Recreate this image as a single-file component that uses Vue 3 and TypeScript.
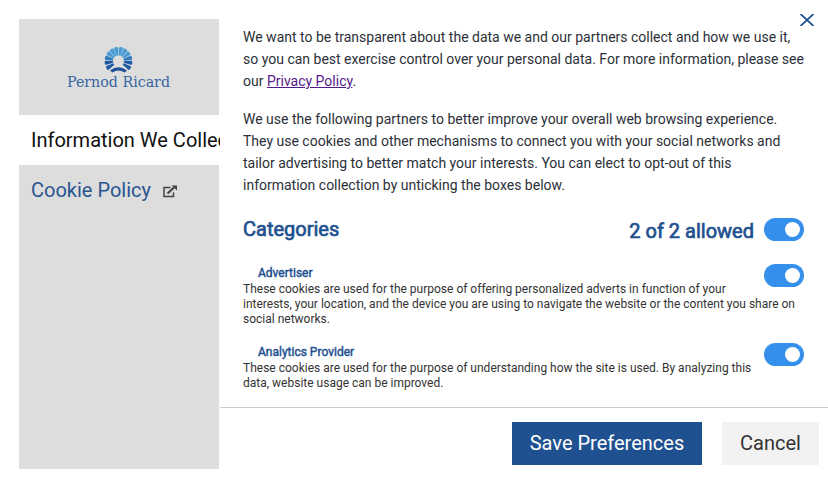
<script setup lang="ts">
import { reactive, computed } from 'vue'

interface Category {
  name: string
  text: string
  allowed: boolean
}

const categories = reactive<Category[]>([
  {
    name: 'Advertiser',
    text: 'These cookies are used for the purpose of offering personalized adverts in function of your interests, your location, and the device you are using to navigate the website or the content you share on social networks.',
    allowed: true,
  },
  {
    name: 'Analytics Provider',
    text: 'These cookies are used for the purpose of understanding how the site is used. By analyzing this data, website usage can be improved.',
    allowed: true,
  },
])

const allowedCount = computed(() => categories.filter((c) => c.allowed).length)
const allAllowed = computed(() => allowedCount.value === categories.length)

function toggleAll() {
  const next = !allAllowed.value
  categories.forEach((c) => (c.allowed = next))
}

const rays = [-122, -98, -75, -53, -32, -11, 11, 32, 53, 75, 98, 122].map((angle) => ({
  angle,
  color: Math.abs(angle) > 90 ? '#1f5ba5' : Math.abs(angle) > 60 ? '#2f7cc0' : '#4a9bd3',
}))
</script>

<template>
  <div class="dialog">
    <aside class="side">
      <div class="brand">
        <svg width="110" height="50" viewBox="0 0 110 50">
          <g transform="translate(54.5 17)">
            <path
              v-for="r in rays"
              :key="r.angle"
              d="M-0.900 -5.500L-2.200 -13.300Q0 -15 2.200 -13.300L0.900 -5.500Z"
              :fill="r.color"
              :transform="`rotate(${r.angle})`"
            />
            <path d="M-8.500 9.500Q0 3 8.500 9.500L6 11.500Q0 7.500 -6 11.500Z" fill="#1f5199" />
          </g>
          <text x="3" y="43" textLength="103" lengthAdjust="spacingAndGlyphs" class="brand-name">Pernod Ricard</text>
        </svg>
      </div>
      <div class="tab active">Information We Collect</div>
      <div class="tab link">
        <span>Cookie Policy</span>
        <svg class="ext" width="14" height="13" viewBox="0 0 14 13" fill="none" stroke="#444">
          <path d="M7.500 2.500H1V11.500H10.500V7.500" stroke-width="1.500" />
          <path d="M4.500 8.500L11 2.500" stroke-width="2.200" />
          <path d="M8.500 0.500H14V5.500Z" fill="#444" stroke="none" />
        </svg>
      </div>
    </aside>
    <main class="main">
      <svg class="close" width="14" height="12" viewBox="0 0 14 12">
        <path d="M0.500 0L13.500 12M13.500 0L0.500 12" stroke="#1f5190" stroke-width="1.800" />
      </svg>
      <section class="content">
        <p class="intro">
          We want to be transparent about the data we and our partners collect and how we use it,<br />
          so you can best exercise control over your personal data. For more information, please see<br />
          our <a href="#">Privacy Policy</a>.
        </p>
        <p class="intro">
          We use the following partners to better improve your overall web browsing experience.<br />
          They use cookies and other mechanisms to connect you with your social networks and<br />
          tailor advertising to better match your interests. You can elect to opt-out of this<br />
          information collection by unticking the boxes below.
        </p>
        <header class="heading">
          <h2>Categories</h2>
          <span class="count">{{ allowedCount }} of {{ categories.length }} allowed</span>
          <button class="switch" :class="{ on: allAllowed }" aria-label="All" @click="toggleAll"></button>
        </header>
        <article v-for="c in categories" :key="c.name" class="category">
          <button class="switch" :class="{ on: c.allowed }" :aria-label="c.name" @click="c.allowed = !c.allowed"></button>
          <h3>{{ c.name }}</h3>
          <p>{{ c.text }}</p>
        </article>
      </section>
      <footer class="actions">
        <button class="btn save">Save Preferences</button>
        <button class="btn cancel">Cancel</button>
      </footer>
    </main>
  </div>
</template>

<style>
body {
  background: #fff;
}
</style>

<style scoped>
.dialog {
  display: flex;
  width: 828px;
  height: 487px;
  box-sizing: border-box;
  padding-left: 19px;
  overflow: hidden;
  font-family: Roboto, sans-serif;
  color: #2c3038;
}
.side {
  width: 200px;
  height: 450px;
  margin-top: 19px;
  background: #ddd;
  flex: none;
}
.brand {
  height: 96px;
  padding: 25px 0 0 45px;
  box-sizing: border-box;
}
.brand svg {
  display: block;
}
.brand-name {
  font: 14px 'DejaVu Serif', serif;
  fill: #3565a3;
}
.tab {
  height: 50px;
  line-height: 50px;
  padding-left: 12px;
  font-size: 20px;
  white-space: nowrap;
  overflow: hidden;
}
.tab.active {
  background: #fff;
  color: #111;
  width: 189px;
}
.tab.link {
  display: flex;
  align-items: center;
  gap: 12px;
  color: #2a5590;
}
.ext {
  margin-top: 2px;
}
.main {
  position: relative;
  flex: 1;
  min-width: 0;
  margin-left: 1px;
  display: flex;
  flex-direction: column;
}
.close {
  position: absolute;
  left: 580px;
  top: 14px;
}
.content {
  height: 407px;
  box-sizing: border-box;
  padding: 26px 24px 0 23px;
}
.intro {
  margin: 0 0 16px;
  font-size: 14px;
  line-height: 22px;
  white-space: nowrap;
}
.intro a {
  color: #551a8b;
}
.heading {
  display: flex;
  align-items: flex-start;
  margin-top: 22px;
  height: 46px;
}
h2,
.count {
  margin: 0;
  font-size: 20px;
  line-height: 24px;
  font-weight: 400;
  color: #1f5190;
  -webkit-text-stroke: 0.7px #1f5190;
}
h2 {
  line-height: 22px;
}
.count {
  margin-left: auto;
  margin-right: 10px;
  padding-top: 1px;
}
.switch {
  flex: none;
  width: 40px;
  height: 23px;
  padding: 0 4px;
  border: 0;
  border-radius: 12px;
  background: #ccc;
  display: flex;
  align-items: center;
}
.switch.on {
  background: #3490eb;
  justify-content: flex-end;
}
.switch::after {
  content: '';
  width: 15px;
  height: 15px;
  border-radius: 50%;
  background: #fff;
}
.category {
  height: 79px;
}
.category .switch {
  float: right;
  margin-left: 8px;
}
h3 {
  margin: 0;
  padding: 2px 0 1px 15px;
  font-size: 12px;
  line-height: 15px;
  font-weight: 400;
  color: #1f5190;
  -webkit-text-stroke: 0.45px #1f5190;
}
.category p {
  margin: 0;
  font-size: 12px;
  line-height: 15px;
  color: #333;
}
.actions {
  flex: 1;
  border-top: 1px solid #ccc;
  display: flex;
  justify-content: flex-end;
  align-items: flex-start;
  gap: 20px;
  padding: 14px 9px 0 0;
}
.btn {
  height: 43px;
  border: 0;
  padding: 0 0 1px;
  font: 20px Roboto, sans-serif;
}
.save {
  width: 190px;
  background: #1f5190;
  color: #fff;
}
.cancel {
  width: 97px;
  background: #f2f2f2;
  color: #333;
}
</style>
